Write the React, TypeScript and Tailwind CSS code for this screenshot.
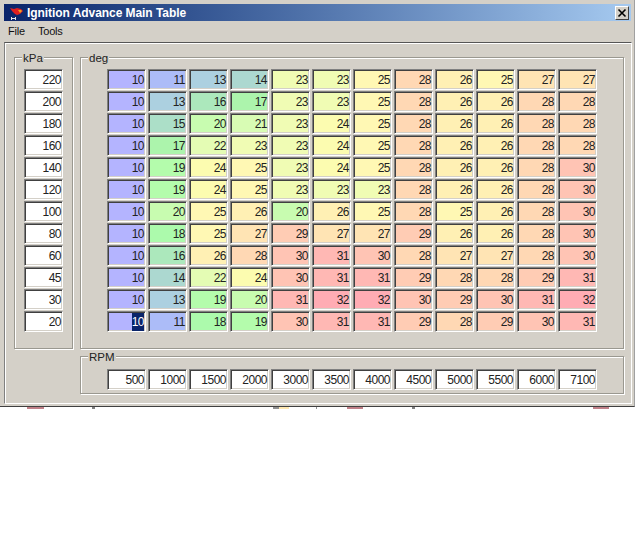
const rows: [number, number[]][] = [
  [220, [10, 11, 13, 14, 23, 23, 25, 28, 26, 25, 27, 27]],
  [200, [10, 13, 16, 17, 23, 23, 25, 28, 26, 26, 28, 28]],
  [180, [10, 15, 20, 21, 23, 24, 25, 28, 26, 26, 28, 28]],
  [160, [10, 17, 22, 23, 23, 24, 25, 28, 26, 26, 28, 28]],
  [140, [10, 19, 24, 25, 23, 24, 25, 28, 26, 26, 28, 30]],
  [120, [10, 19, 24, 25, 23, 23, 23, 28, 26, 26, 28, 30]],
  [100, [10, 20, 25, 26, 20, 26, 25, 28, 25, 26, 28, 30]],
  [80, [10, 18, 25, 27, 29, 27, 27, 29, 26, 26, 28, 30]],
  [60, [10, 16, 26, 28, 30, 31, 30, 28, 27, 27, 28, 30]],
  [45, [10, 14, 22, 24, 30, 31, 31, 29, 28, 28, 29, 31]],
  [30, [10, 13, 19, 20, 31, 32, 32, 30, 29, 30, 31, 32]],
  [20, [10, 11, 18, 19, 30, 31, 31, 29, 28, 29, 30, 31]],
];
const rpm = [500, 1000, 1500, 2000, 3000, 3500, 4000, 4500, 5000, 5500, 6000, 7100];
const colors: Record<number, string> = {
  10: "#b4b4ff", 11: "#acbcf8", 13: "#acd0e0", 14: "#acd8d0", 15: "#acdfc8", 16: "#ace8bc",
  17: "#acf4ac", 18: "#acfaac", 19: "#b4fcac", 20: "#c8fcb0", 21: "#d8fcb4", 22: "#e4fcb4",
  23: "#f0fcb4", 24: "#fcfcb0", 25: "#fff8b4", 26: "#fff0b4", 27: "#ffe4b4", 28: "#ffd8b4",
  29: "#ffccb4", 30: "#ffc4b4", 31: "#ffb8b4", 32: "#ffacb4",
};

function Cell({ value, bg, selected }: { value: number; bg?: string; selected?: boolean }) {
  return (
    <div
      className="flex h-[21px] w-[39px] items-center justify-end border border-t-[#808080] border-l-[#808080] border-r-white border-b-white pr-[1px] text-[12px] tracking-[-0.5px] text-[#222] shadow-[inset_1px_1px_0_#404040,inset_-1px_-1px_0_#d4d0c8]"
      style={{ backgroundColor: bg ?? "#ffffff" }}
    >
      {selected ? <span className="bg-[#0a246a] text-white">{value}</span> : value}
    </div>
  );
}

function Group({ label, className, children }: { label: string; className: string; children: React.ReactNode }) {
  return (
    <div className={`relative border border-[#9a9890] shadow-[inset_1px_1px_0_#ffffff,1px_1px_0_#ffffff] ${className}`}>
      <span className="absolute top-[-7px] left-[7px] bg-[#d4d0c8] px-[1px] text-[11.5px] leading-[14px] text-[#222]">{label}</span>
      {children}
    </div>
  );
}

export default function App() {
  return (
    <div className="h-[553px] w-[635px] bg-white font-['Liberation_Sans',sans-serif]">
      <div className="h-[407px] border-b border-b-[#404040] border-r border-r-[#a0a0a0] bg-[#d4d0c8] pt-[4px] pl-[4px]">
        <div className="flex h-[17px] w-[627px] items-center bg-gradient-to-r from-[#0a246a] to-[#a6caf0] pr-[2px]">
          <svg width="16" height="16" viewBox="0 0 16 16" className="ml-[5px] shrink-0">
            <path d="M1 3l4 1 3-1 4 1 2 2-3 3-3 1-2-1-3-3z" fill="#e02020" />
            <path d="M9 5l3 0 1 1-2 2z" fill="#f0a020" />
            <path d="M2 12h1v3H2zM6 12h1v3H6zM3 13h3v1H3z" fill="#e8e8e8" />
          </svg>
          <span className="ml-[2px] text-[12px] leading-none font-bold tracking-[-0.06px] text-white">Ignition Advance Main Table</span>
          <div className="ml-auto flex h-[14px] w-[14px] items-center justify-center border border-t-white border-l-white border-r-[#404040] border-b-[#404040] bg-[#d4d0c8]">
            <svg width="10" height="10" viewBox="0 0 10 10">
              <path d="M1.5 1.5l7 7M8.5 1.5l-7 7" stroke="#000" strokeWidth="1.6" />
            </svg>
          </div>
        </div>
        <div className="flex h-[21px] items-center gap-[13px] pl-[4px] text-[11px] tracking-[-0.2px] text-[#111]">
          <span>File</span>
          <span>Tools</span>
        </div>
        <div className="h-[362px] w-[628px] border border-t-[#555] border-l-[#808080] border-r-white border-b-white pt-[14px] pl-[9px] shadow-[inset_1px_1px_0_#ffffff]">
          <div className="flex gap-[7px]">
            <Group label="kPa" className="h-[292px] w-[59px] pt-[11px] pl-[9px]">
              <div className="flex flex-col gap-[1px]">
                {rows.map(([k]) => (
                  <Cell key={k} value={k} />
                ))}
              </div>
            </Group>
            <Group label="deg" className="h-[292px] w-[544px] pt-[11px] pl-[26px]">
              <div className="grid grid-cols-[repeat(12,39px)] gap-x-[2px] gap-y-[1px]">
                {rows.map(([k, vals], r) =>
                  vals.map((v, c) => (
                    <Cell key={`${k}-${c}`} value={v} bg={colors[v]} selected={r === 11 && c === 0} />
                  ))
                )}
              </div>
            </Group>
          </div>
          <div className="mt-[7px] ml-[66px]">
            <Group label="RPM" className="h-[38px] w-[544px] pt-[12px] pl-[26px]">
              <div className="grid grid-cols-[repeat(12,39px)] gap-x-[2px]">
                {rpm.map((v) => (
                  <Cell key={v} value={v} />
                ))}
              </div>
            </Group>
          </div>
        </div>
      </div>
      <div className="relative h-[2px]">
        <span className="absolute left-[27px] h-[2px] w-[17px] bg-[#c08088]" />
        <span className="absolute left-[92px] h-[2px] w-[3px] bg-[#808080]" />
        <span className="absolute left-[273px] h-[2px] w-[6px] bg-[#909090]" />
        <span className="absolute left-[279px] h-[2px] w-[10px] bg-[#ffe8b0]" />
        <span className="absolute left-[316px] h-[2px] w-[1px] bg-[#909090]" />
        <span className="absolute left-[347px] h-[2px] w-[16px] bg-[#c08088]" />
        <span className="absolute left-[412px] h-[2px] w-[3px] bg-[#808080]" />
        <span className="absolute left-[593px] h-[2px] w-[16px] bg-[#c08088]" />
      </div>
    </div>
  );
}
